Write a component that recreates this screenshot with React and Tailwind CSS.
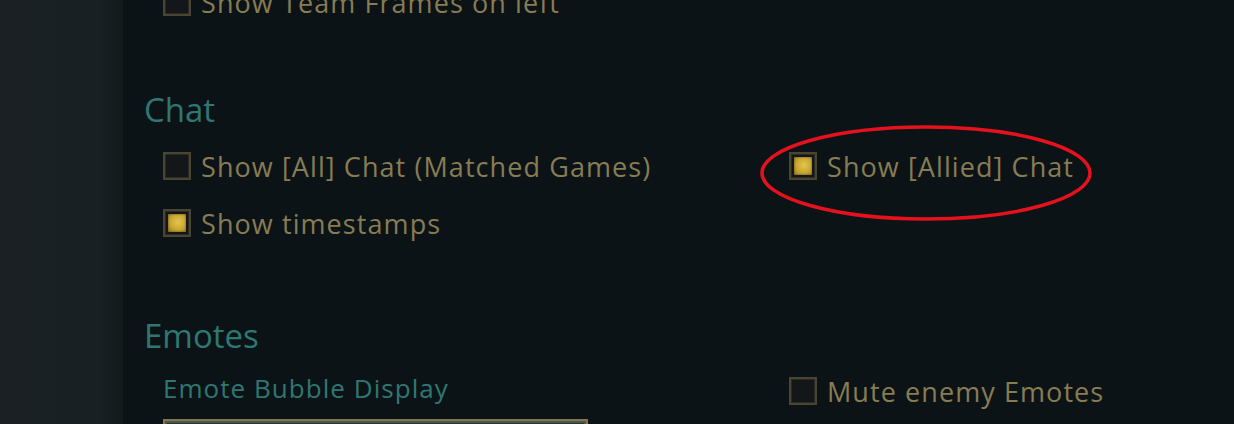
import React from 'react';

function Checkbox({ checked }) {
	return (
		<span className="shrink-0 w-[28px] h-[28px] border-[2px] border-[#4a4532] bg-[#13171a] p-[3px] shadow-[inset_0_0_0_1px_#2a2a22]">
			{checked && (
				<span className="block w-full h-full bg-[radial-gradient(circle_at_55%_45%,#e4c64c_0%,#c9a632_55%,#8f7422_100%)] shadow-[inset_0_0_2px_#5a4816]" />
			)}
		</span>
	);
}

function Option({ checked, label }) {
	return (
		<label className="flex items-center gap-[10px] text-[27px] tracking-[0.04em] text-[#877c54] leading-none">
			<Checkbox checked={checked} />
			<span>{label}</span>
		</label>
	);
}

export default function App() {
	return (
		<div className="flex h-[424px] w-[1234px] overflow-hidden bg-[#0c1316] font-['Open_Sans','Lato',sans-serif]">
			{/* left rail */}
			<div className="w-[123px] shrink-0 bg-[linear-gradient(to_right,#1a2023_0%,#192023_80%,#121a1c_100%)]" />

			<div className="relative flex-1 pl-[21px]">
				<div className="-mt-[12px] pl-[19px]">
					<Option checked={false} label="Show Team Frames on left" />
				</div>

				{/* Chat */}
				<h2 className="mt-[77px] text-[33px] leading-none text-[#2f7772]">Chat</h2>
				<div className="mt-[26px] grid grid-cols-[626px_1fr] gap-y-[29px] pl-[19px]">
					<Option checked={false} label="Show [All] Chat (Matched Games)" />
					<Option checked={true} label="Show [Allied] Chat" />
					<Option checked={true} label="Show timestamps" />
				</div>

				{/* Emotes */}
				<h2 className="mt-[82px] text-[33px] leading-none text-[#2f7772]">Emotes</h2>
				<div className="mt-[23px] grid grid-cols-[626px_1fr] pl-[19px]">
					<div>
						<div className="text-[26px] tracking-[0.04em] leading-none text-[#2f7772]">Emote Bubble Display</div>
						<div className="mt-[18px] w-[425px] h-[40px] border-[2px] border-[#8a7350] bg-[#1d3838] shadow-[inset_0_0_0_2px_#4a5a48]" />
					</div>
					<div className="pt-[2px]">
						<Option checked={false} label="Mute enemy Emotes" />
					</div>
				</div>

				{/* annotation */}
				<svg className="absolute left-[636px] top-[124px] pointer-events-none" width="336" height="100" viewBox="0 0 336 100">
					<ellipse cx="167" cy="49" rx="164" ry="46" fill="none" stroke="#e5121e" strokeWidth="3.5" />
				</svg>
			</div>
		</div>
	);
}
